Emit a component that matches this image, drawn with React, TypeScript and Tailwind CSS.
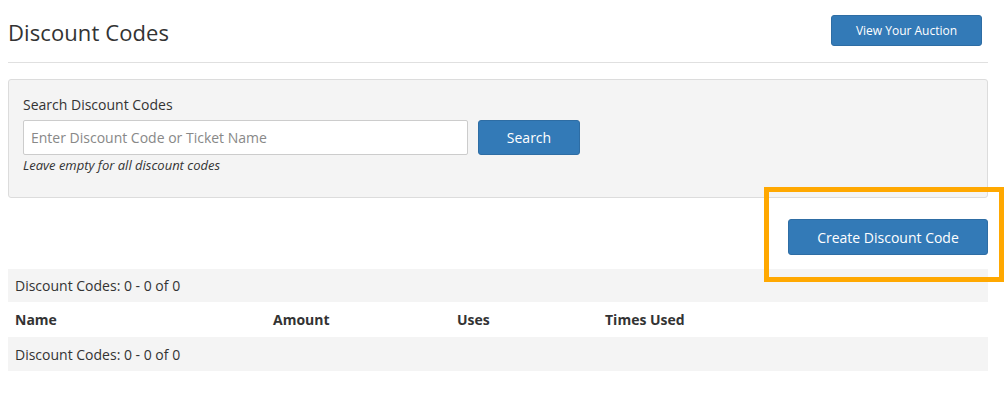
import { FC } from 'react';

const btn =
  'bg-[#337ab7] border border-[#2e6da4] rounded-[3px] text-white font-["Open_Sans",sans-serif] cursor-pointer';

const DiscountCodes: FC = () => {
  return (
    <div className="w-[1006px] h-[394px] bg-white px-2 font-['Open_Sans',sans-serif] text-[14px] text-[#333]">
      <div className="w-[980px]">
        <div className="flex justify-between items-start h-[63px] border-b border-[#e0e0e0]">
          <h1 className="mt-[17px] text-[22px] leading-[30px] text-[#333] font-normal tracking-[0.1px]">Discount Codes</h1>
          <button className={`${btn} mt-[15px] mr-[6px] w-[151px] h-[31px] text-[12px]`}>View Your Auction</button>
        </div>

        <div className="mt-4 h-[119px] border border-[#dcdcdc] rounded-[3px] bg-[#f4f4f4] px-[14px] pt-[15px]">
          <label className="block leading-[20px]">Search Discount Codes</label>
          <div className="flex gap-[10px] mt-[5px]">
            <input
              type="text"
              placeholder="Enter Discount Code or Ticket Name"
              className="w-[445px] h-[35px] px-[7px] bg-white border border-[#ccc] rounded-[2px] text-[14px] placeholder:text-[#888] outline-none"
            />
            <button className={`${btn} w-[102px] h-[35px] text-[14px]`}>Search</button>
          </div>
          <p className="italic text-[13px] leading-[20px] mt-0">Leave empty for all discount codes</p>
        </div>

        <div className="flex justify-end mt-[21px] h-[50px]">
          <div className="relative h-[36px]">
            <button className={`${btn} w-[200px] h-[36px] text-[14px]`}>Create Discount Code</button>
            <div className="absolute left-[-24px] top-[-32px] right-[-16px] bottom-[-27px] border-[5px] border-[#ffa800]" />
          </div>
        </div>

        <table className="w-full border-collapse">
          <colgroup>
            <col className="w-[258px]" />
            <col className="w-[184px]" />
            <col className="w-[148px]" />
            <col />
          </colgroup>
          <tbody>
            <tr className="bg-[#f4f4f4] h-[33px]">
              <td colSpan={4} className="px-[7px]">Discount Codes: 0 - 0 of 0</td>
            </tr>
            <tr className="h-[35px] font-bold">
              <td className="px-[7px]">Name</td>
              <td className="px-[7px]">Amount</td>
              <td className="px-[7px]">Uses</td>
              <td className="px-[7px]">Times Used</td>
            </tr>
            <tr className="bg-[#f4f4f4] h-[34px]">
              <td colSpan={4} className="px-[7px]">Discount Codes: 0 - 0 of 0</td>
            </tr>
          </tbody>
        </table>
      </div>
    </div>
  );
};

export default function App() {
  return <DiscountCodes />;
}
